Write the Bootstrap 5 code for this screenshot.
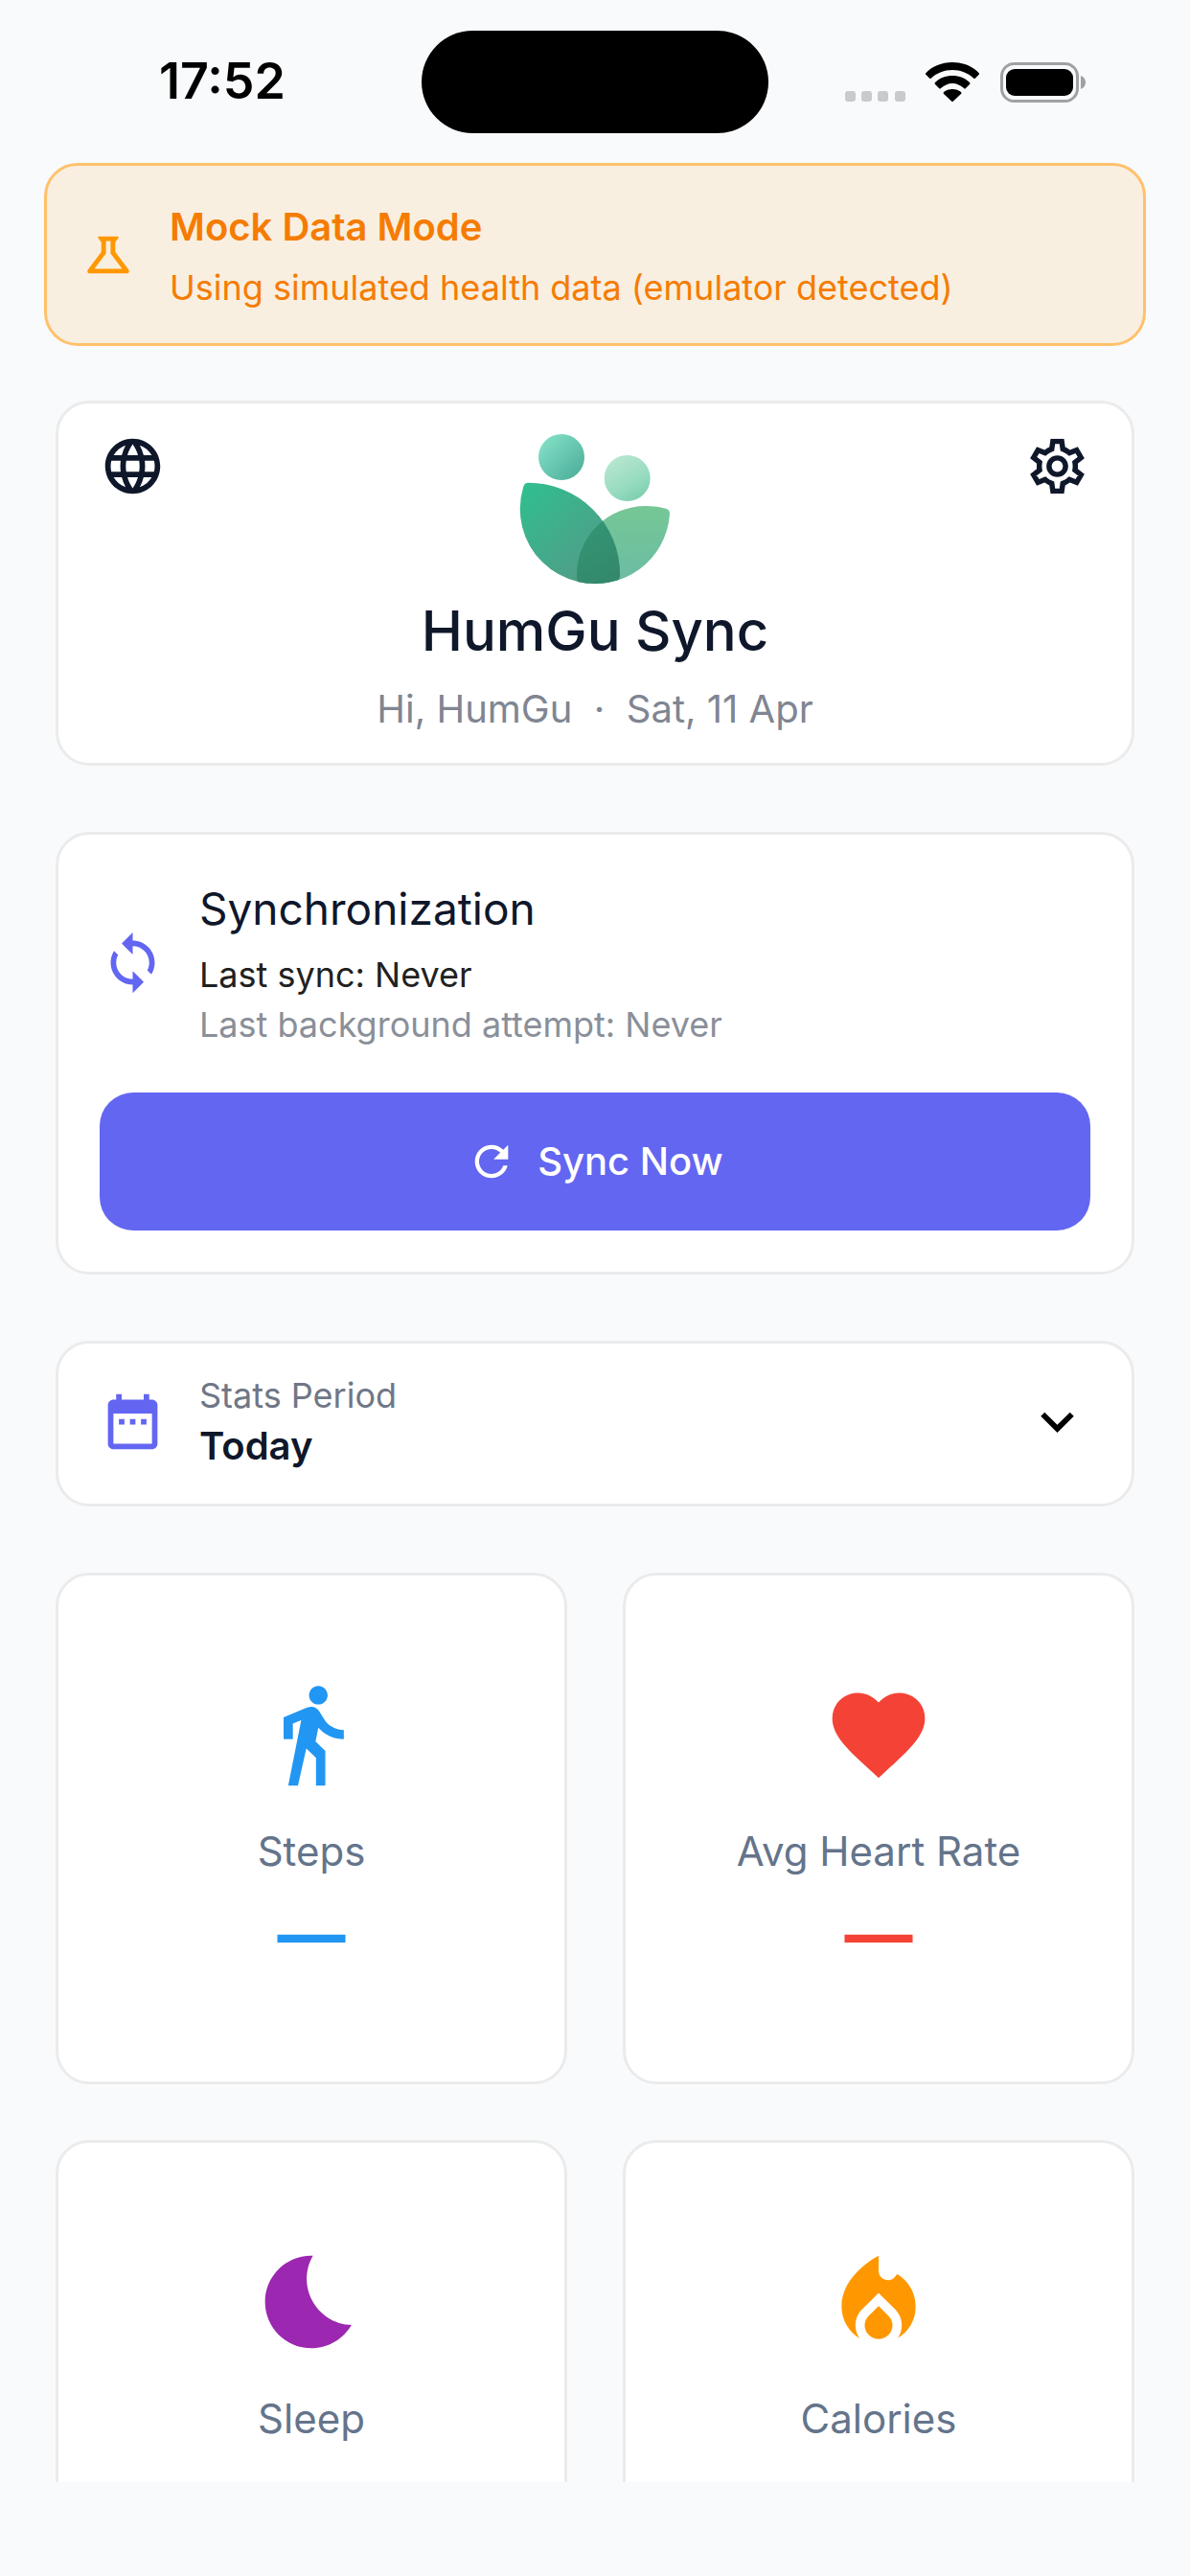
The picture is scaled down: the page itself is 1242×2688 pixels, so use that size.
<!DOCTYPE html>
<html lang="en">
<head>
<meta charset="utf-8">
<meta name="viewport" content="width=device-width, initial-scale=1">
<title>HumGu Sync</title>
<link rel="stylesheet" href="https://cdn.jsdelivr.net/npm/bootstrap@5.3.0/dist/css/bootstrap.min.css">
<style>
  :root { --ink: #0f172a; --accent: #6366f1; --line: #ebebeb; --surface: #f9fafc; }
  body { font-family: Inter, "Liberation Sans", sans-serif; background: var(--surface); color: var(--ink); font-size: 36px; line-height: 52px; }
  svg { display: block; flex: none; fill: currentColor; }

  .status-bar { height: 170px; padding: 32px 109px 31px; }
  .status-side { flex: 1 1 0; }
  .clock { padding-left: 57px; font-size: 52px; line-height: 60px; font-weight: 600; color: #000; }
  .island { width: 362px; height: 107px; border-radius: 54px; background: #000; }

  .mock-banner { margin: 0 46px 57px; padding: 35px; gap: 35px; border: 3px solid #ffc16b; border-radius: 35px; background: #f9efe1; color: #f57c00; }
  .mock-banner svg { color: #ff9800; }
  .mock-title { font-size: 40px; line-height: 58px; font-weight: 600; }
  .mock-text { line-height: 46px; margin-top: 11px; }

  .stack { padding: 0 58px; gap: 69px; }
  .panel { background: #fff; border: 3px solid var(--line); border-radius: 35px; padding: 43px; }
  .panel-head { padding-top: 31px; padding-bottom: 31px; }
  .panel-period { padding-top: 28px; padding-bottom: 33px; }
  .row-gap-icon { gap: 35px; }
  .accent { color: var(--accent); }
  .icon-button { color: var(--ink); }
  .icon-button:hover { color: var(--accent); }

  .app-title { font-size: 58px; line-height: 70px; font-weight: 500; margin: 13px 0 22px; }
  .app-sub { font-size: 40px; line-height: 50px; color: #808592; white-space: pre; }

  .sync-title { font-size: 46px; line-height: 69px; font-weight: 400; margin: 0 0 8px; }
  .sync-last { color: #212121; }
  .sync-attempt { color: #8a8f99; }
  .sync-button { margin-top: 45px; height: 144px; gap: 22px; border-radius: 35px; font-size: 40px; font-weight: 500; color: #fff; background: var(--accent); }
  .sync-button:hover { color: #fff; background: #5053e0; }

  .period-label { color: #6f7787; }
  .period-select { appearance: none; font-size: 40px; line-height: 54px; height: 54px; font-weight: 600; color: var(--ink); }
  .period-arrow { color: #000; }

  .stat-grid { display: grid; grid-template-columns: 1fr 1fr; gap: 58px; }
  .stat-tile { aspect-ratio: 1; padding-top: 108px; }
  .stat-name { font-size: 42px; line-height: 58px; color: #64748b; margin: 35px 0 18px; }
  .stat-value { font-size: 71px; line-height: 79px; font-weight: 700; }
  .blue { color: #2196f3; } .red { color: #f44336; } .purple { color: #9c27b0; } .orange { color: #ff9800; }
  .safe-area { height: 98px; flex: none; }
</style>
<script src="https://cdn.jsdelivr.net/npm/bootstrap@5.3.0/dist/js/bootstrap.bundle.min.js"></script>
</head>
<body>
<div class="d-flex flex-column vh-100 overflow-hidden">
  <header class="status-bar d-flex align-items-center flex-shrink-0">
    <div class="status-side"><span class="clock">17:52</span></div>
    <div class="island"></div>
    <div class="status-side d-flex justify-content-end">
      <svg width="252" height="42" viewBox="0 0 252 42" role="img" aria-label="Wi-Fi connected, battery full">
        <g fill="#c8cacd"><rect x="1" y="30" width="11" height="11" rx="3"/><rect x="18" y="30" width="11" height="11" rx="3"/><rect x="35" y="30" width="11" height="11" rx="3"/><rect x="53" y="30" width="11" height="11" rx="3"/></g>
        <g fill="#000">
          <path d="M113 0C102 0 92 4 85.500 11q-1 1 0 2l3.500 3.500q1 1 2 0C97 11 104.500 8 113 8s16 3 22 8.500q1 1 2 0l3.500-3.500q1-1 0-2C134 4 124 0 113 0z"/>
          <path d="M113 14c-7 0-13.500 2.500-18 7q-1 1 0 2l4 4q1 1 2 0c3.500-3 7.500-5 12-5s8.500 2 12 5q1 1 2 0l4-4q1-1 0-2c-4.500-4.500-11-7-18-7z"/>
          <path d="M113 28c-3.500 0-6.500 1-9 3q-1 1 0 2l8 7.500q1 1 2 0l8-7.500q1-1 0-2c-2.500-2-5.500-3-9-3z"/>
          <rect x="169" y="7" width="70" height="28" rx="9"/>
        </g>
        <rect x="164.500" y="1.500" width="79" height="39" rx="13" fill="none" stroke="#a0a1a3" stroke-width="3"/>
        <path d="M247 14q5 2 5 7t-5 7z" fill="#a0a1a3"/>
      </svg>
    </div>
  </header>

  <main class="flex-grow-1 overflow-hidden">
    <div class="mock-banner d-flex align-items-center" role="status">
      <svg width="58" height="58" viewBox="0 0 24 24" aria-hidden="true"><path fill-rule="evenodd" d="M15.960 4H8.040C7.620 4 7.390 4.480 7.650 4.810L9 6.500v4.170L3.200 18.400C2.710 19.060 3.180 20 4 20h16c.820 0 1.290-.940.800-1.600L15 10.670V6.500l1.350-1.690C16.610 4.480 16.380 4 15.960 4zM13 11.330L18 18H6l5-6.670V6h2z"/></svg>
      <div>
        <div class="mock-title">Mock Data Mode</div>
        <div class="mock-text">Using simulated health data (emulator detected)</div>
      </div>
    </div>

    <div class="stack d-flex flex-column">
      <section class="panel panel-head d-flex justify-content-between align-items-start">
        <button type="button" class="btn p-0 border-0 icon-button" aria-label="Language">
          <svg width="69" height="69" viewBox="0 0 24 24"><path d="M11.990 2C6.470 2 2 6.480 2 12s4.470 10 9.990 10C17.520 22 22 17.520 22 12S17.520 2 11.990 2zm6.930 6h-2.950c-.320-1.250-.780-2.450-1.380-3.560 1.840.630 3.370 1.910 4.330 3.560zM12 4.040c.830 1.200 1.480 2.530 1.910 3.960h-3.820c.430-1.430 1.080-2.760 1.910-3.960zM4.260 14C4.100 13.360 4 12.690 4 12s.100-1.360.260-2h3.380c-.080.660-.140 1.320-.140 2 0 .680.060 1.340.140 2H4.260zm.820 2h2.950c.320 1.250.780 2.450 1.380 3.560-1.840-.630-3.370-1.900-4.330-3.560zm2.950-8H5.080c.960-1.660 2.490-2.930 4.330-3.560C8.810 5.550 8.350 6.750 8.030 8zM12 19.960c-.830-1.200-1.480-2.530-1.910-3.960h3.820c-.430 1.430-1.080 2.760-1.910 3.960zM14.340 14H9.660c-.090-.660-.160-1.320-.160-2 0-.680.070-1.350.160-2h4.680c.090.650.160 1.320.160 2 0 .680-.070 1.340-.160 2zm.250 5.560c.600-1.110 1.060-2.310 1.380-3.560h2.950c-.960 1.650-2.490 2.930-4.330 3.560zM16.360 14c.080-.660.140-1.320.140-2 0-.680-.060-1.340-.140-2h3.380c.160.640.260 1.310.260 2s-.100 1.360-.260 2h-3.380z"/></svg>
        </button>
        <div class="text-center">
          <svg class="mx-auto" width="158" height="158" viewBox="66 65 474 474" role="img" aria-label="HumGu logo">
            <defs>
              <linearGradient id="headA" x1="0" y1="0" x2="1" y2="1"><stop offset=".1" stop-color="#82dfc6"/><stop offset=".9" stop-color="#4eb09b"/></linearGradient>
              <linearGradient id="headB" x1=".2" y1="0" x2=".8" y2="1"><stop offset=".1" stop-color="#b4e5ce"/><stop offset=".6" stop-color="#98dcc0"/><stop offset="1" stop-color="#7accae"/></linearGradient>
              <linearGradient id="leafA" gradientUnits="userSpaceOnUse" x1="80" y1="240" x2="310" y2="480"><stop offset="0" stop-color="#31bd90"/><stop offset="1" stop-color="#519d87"/></linearGradient>
              <linearGradient id="leafB" x1="0" y1="0" x2="0" y2="1"><stop offset="0" stop-color="#76c795"/><stop offset="1" stop-color="#6bbca4"/></linearGradient>
              <linearGradient id="overlap" x1="0" y1="0" x2=".6" y2="1"><stop offset="0" stop-color="#329a76"/><stop offset="1" stop-color="#34866a"/></linearGradient>
              <clipPath id="leafClip"><path d="M79 232Q82 220 94 220A287 287 0 0 1 381 507Q381 520 376 524A234 234 0 0 1 79 232z"/></clipPath>
            </defs>
            <circle cx="198" cy="140" r="72" fill="url(#headA)"/>
            <circle cx="404" cy="206" r="72" fill="url(#headB)"/>
            <path fill="url(#leafB)" d="M249 530Q246 523 246 508A215 215 0 0 1 461 293Q500 293 527 302Q537 305 537 318A234 234 0 0 1 249 530z"/>
            <path fill="url(#leafA)" d="M79 232Q82 220 94 220A287 287 0 0 1 381 507Q381 520 376 524A234 234 0 0 1 79 232z"/>
            <path fill="url(#overlap)" clip-path="url(#leafClip)" d="M249 530Q246 523 246 508A215 215 0 0 1 461 293L461 540H260z"/>
          </svg>
          <h1 class="app-title">HumGu Sync</h1>
          <div class="app-sub">Hi, HumGu  ·  Sat, 11 Apr</div>
        </div>
        <button type="button" class="btn p-0 border-0 icon-button" aria-label="Settings">
          <svg width="69" height="69" viewBox="0 0 24 24">
            <defs><clipPath id="gearClip"><path id="gearShape" d="M14.430 2H9.570l-.440 3.080q-.930.390-1.700 1L4.560 4.920 2.130 9.120l2.440 1.910q-.130.970 0 1.940l-2.440 1.910 2.430 4.200 2.870-1.160q.770.610 1.700 1L9.570 22h4.860l.440-3.080q.930-.390 1.700-1l2.870 1.160 2.430-4.200-2.440-1.910q.130-.970 0-1.940l2.440-1.910-2.430-4.200-2.870 1.160q-.770-.610-1.700-1z"/></clipPath></defs>
            <use href="#gearShape" clip-path="url(#gearClip)" fill="none" stroke="currentColor" stroke-width="3.800"/>
            <circle cx="12" cy="12" r="3" fill="none" stroke="currentColor" stroke-width="1.900"/>
          </svg>
        </button>
      </section>

      <section class="panel">
        <div class="d-flex align-items-center row-gap-icon">
          <svg class="accent" width="69" height="69" viewBox="0 0 24 24" aria-hidden="true"><path d="M12 4V1L8 5l4 4V6c3.310 0 6 2.690 6 6 0 1.010-.250 1.970-.700 2.800l1.460 1.460C19.540 15.030 20 13.570 20 12c0-4.420-3.580-8-8-8zm0 14c-3.310 0-6-2.690-6-6 0-1.010.250-1.970.700-2.800L5.240 7.740C4.460 8.970 4 10.430 4 12c0 4.420 3.580 8 8 8v3l4-4-4-4v3z"/></svg>
          <div>
            <h2 class="sync-title">Synchronization</h2>
            <div class="sync-last">Last sync: Never</div>
            <div class="sync-attempt">Last background attempt: Never</div>
          </div>
        </div>
        <button type="button" class="btn border-0 w-100 d-flex align-items-center justify-content-center sync-button">
          <svg width="52" height="52" viewBox="0 0 24 24" aria-hidden="true"><path d="M17.650 6.350C16.200 4.900 14.210 4 12 4c-4.420 0-7.990 3.580-7.990 8s3.570 8 7.990 8c3.730 0 6.840-2.550 7.730-6h-2.080c-.820 2.330-3.040 4-5.650 4-3.310 0-6-2.690-6-6s2.690-6 6-6c1.660 0 3.140.690 4.220 1.780L13 11h7V4l-2.350 2.350z"/></svg>
          <span>Sync Now</span>
        </button>
      </section>

      <section class="panel panel-period d-flex align-items-center row-gap-icon">
        <svg class="accent" width="69" height="69" viewBox="0 0 24 24" aria-hidden="true"><path d="M9 11H7v2h2v-2zm4 0h-2v2h2v-2zm4 0h-2v2h2v-2zm2-7h-1V2h-2v2H8V2H6v2H5c-1.110 0-1.990.900-1.990 2L3 20c0 1.100.890 2 2 2h14c1.100 0 2-.900 2-2V6c0-1.100-.900-2-2-2zm0 16H5V9h14v11z"/></svg>
        <div class="flex-grow-1">
          <label class="period-label d-block" for="period">Stats Period</label>
          <select id="period" class="period-select d-block w-100 border-0 bg-transparent p-0">
            <option selected>Today</option>
          </select>
        </div>
        <svg class="period-arrow" width="69" height="69" viewBox="0 0 24 24" aria-hidden="true"><path d="M7.410 8.590L12 13.170l4.590-4.580L18 10l-6 6-6-6z"/></svg>
      </section>

      <section class="stat-grid">
        <article class="panel stat-tile d-flex flex-column align-items-center">
          <svg class="blue" width="116" height="116" viewBox="0 0 24 24" aria-hidden="true"><path d="M13.500 5.500c1.100 0 2-.900 2-2s-.900-2-2-2-2 .900-2 2 .900 2 2 2zM9.800 8.900L7 23h2.100l1.800-8 2.100 2v6h2v-7.500l-2.100-2 .600-3C14.800 12 16.800 13 19 13v-2c-1.900 0-3.500-1-4.300-2.400l-1-1.600c-.400-.600-1-1-1.700-1-.300 0-.500.100-.800.100L6 8.300V13h2V9.600l1.800-.7"/></svg>
          <div class="stat-name">Steps</div>
          <div class="stat-value blue">—</div>
        </article>
        <article class="panel stat-tile d-flex flex-column align-items-center">
          <svg class="red" width="116" height="116" viewBox="0 0 24 24" aria-hidden="true"><path d="M12 21.350l-1.450-1.320C5.400 15.360 2 12.280 2 8.500 2 5.420 4.420 3 7.500 3c1.740 0 3.410.810 4.500 2.090C13.090 3.810 14.760 3 16.500 3 19.580 3 22 5.420 22 8.500c0 3.780-3.400 6.860-8.550 11.540L12 21.350z"/></svg>
          <div class="stat-name">Avg Heart Rate</div>
          <div class="stat-value red">—</div>
        </article>
        <article class="panel stat-tile d-flex flex-column align-items-center">
          <svg class="purple" width="116" height="116" viewBox="0 0 24 24" aria-hidden="true"><path d="M12.340 2.020C6.590 1.820 2 6.420 2 12c0 5.520 4.480 10 10 10 3.710 0 6.930-2.020 8.660-5.020-7.510-.250-12.090-8.430-8.320-14.960z"/></svg>
          <div class="stat-name">Sleep</div>
        </article>
        <article class="panel stat-tile d-flex flex-column align-items-center">
          <svg class="orange" width="116" height="116" viewBox="0 0 24 24" aria-hidden="true"><path d="M16 6l-.440.550C14.380 8.020 12 7.190 12 5.300V2S4 6 4 13c0 2.920 1.560 5.470 3.890 6.860-.560-.790-.890-1.760-.890-2.800 0-1.320.520-2.560 1.470-3.500L12 10.100l3.530 3.470c.950.930 1.470 2.170 1.470 3.500 0 1.020-.310 1.960-.850 2.750 1.890-1.150 3.290-3.060 3.710-5.300.660-3.550-1.070-6.900-3.860-8.520z"/><path d="M12 12.900l-2.130 2.090c-.560.560-.870 1.290-.870 2.070C9 18.680 10.350 20 12 20s3-1.320 3-2.940c0-.780-.310-1.520-.870-2.070L12 12.900z"/></svg>
          <div class="stat-name">Calories</div>
        </article>
      </section>
    </div>
  </main>
  <div class="safe-area"></div>
</div>
</body>
</html>
